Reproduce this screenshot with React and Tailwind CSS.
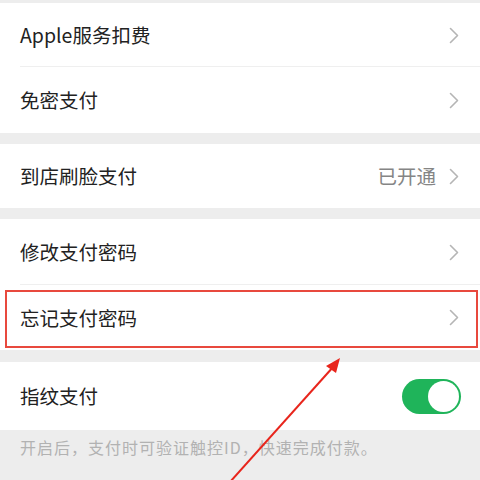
import React from "react";

const Chevron = () => (
  <svg width="10" height="17" viewBox="0 0 10 17" fill="none" stroke="#b5b5b5" strokeWidth="1.6" strokeLinecap="round" strokeLinejoin="round">
    <polyline points="1.5 1.5 8.5 8.5 1.5 15.5" />
  </svg>
);

const Row = ({ label, value, last, children, h = "h-[65px]" }) => (
  <div className={`relative flex items-center justify-between bg-white pl-5 pr-[21px] ${h}`}>
    <span className="text-[19.5px] text-[#222]">{label}</span>
    <div className="flex items-center gap-[13px]">
      {value && <span className="text-[19.5px] text-[#858585]">{value}</span>}
      {children || <Chevron />}
    </div>
    {!last && <div className="absolute bottom-0 left-5 right-0 h-px bg-[#efefef]" />}
  </div>
);

const Toggle = () => (
  <div className="-mr-[2px] flex h-[35px] w-[59px] items-center justify-end rounded-full bg-[#1fb45a] pr-[2px]">
    <div className="h-[31px] w-[31px] rounded-full bg-white" />
  </div>
);

export default function App() {
  return (
    <div
      className="relative h-[480px] w-[480px] overflow-hidden bg-[#ededed]"
      style={{ fontFamily: '"Noto Sans CJK SC", "Noto Sans", sans-serif' }}
    >
      <div className="h-[3px]" />
      <Row label="Apple服务扣费" h="h-[64px]" />
      <Row label="免密支付" last h="h-[66px]" />
      <div className="h-[11px]" />
      <Row label="到店刷脸支付" value="已开通" last h="h-[64px]" />
      <div className="h-[11px]" />
      <Row label="修改支付密码" h="h-[66px]" />
      <Row label="忘记支付密码" last h="h-[65px]" />
      <div className="h-[12px]" />
      <Row label="指纹支付" last h="h-[68px]">
        <Toggle />
      </Row>
      <div className="px-5 pt-[5px] text-[16px] tracking-[1px] text-[#b2b2b2]">
        开启后，支付时可验证触控ID，快速完成付款。
      </div>

      {/* annotation */}
      <div className="absolute left-[5px] top-[290px] h-[58px] w-[473px] border-2 border-[#e8493e]" />
      <svg className="absolute left-0 top-0" width="480" height="480" viewBox="0 0 480 480">
        <line x1="334" y1="366" x2="230" y2="482" stroke="#e8251c" strokeWidth="2" />
        <polygon points="340,358 326,366 336,373" fill="#e8251c" />
      </svg>
    </div>
  );
}
